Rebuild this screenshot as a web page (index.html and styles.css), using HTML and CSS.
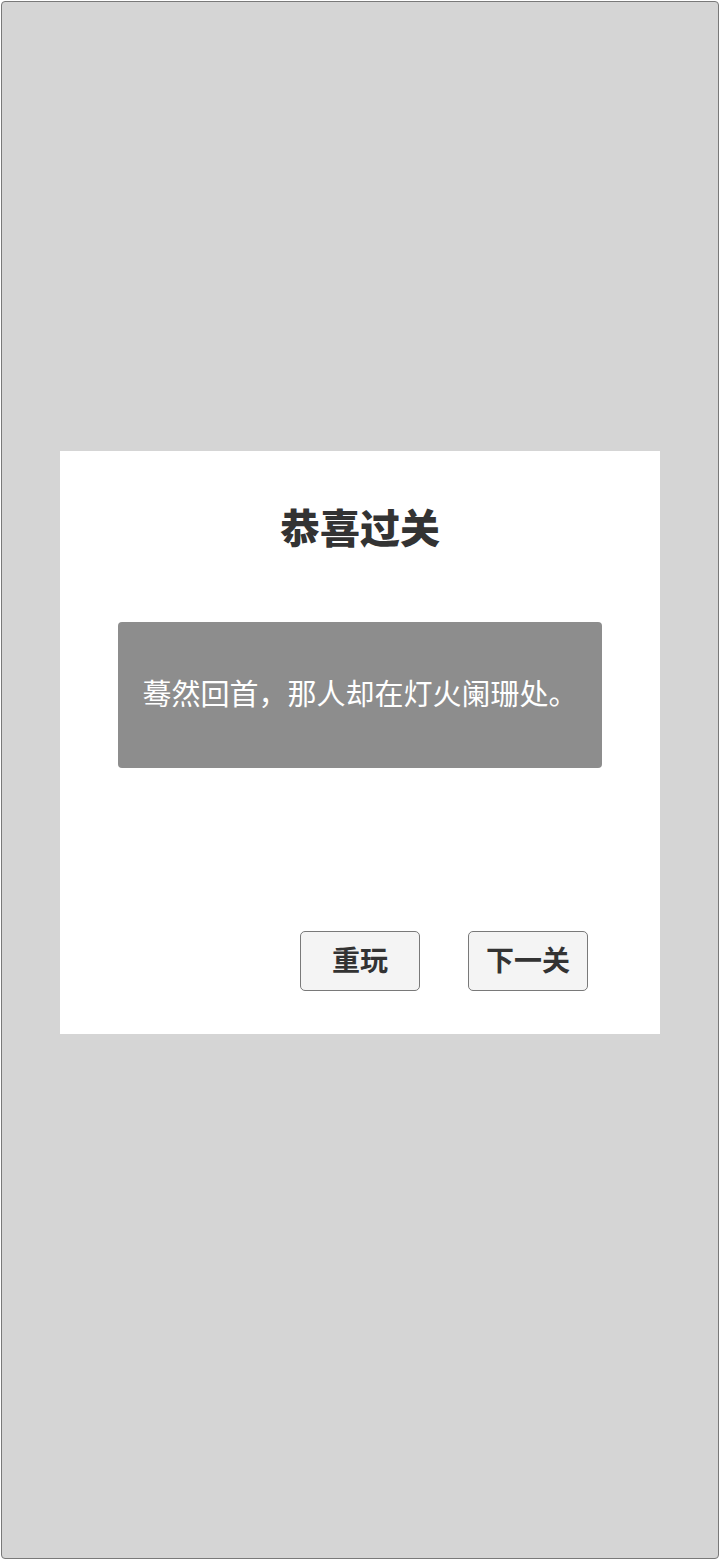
FILE: index.html
```
<!DOCTYPE html>
<html lang="zh-CN">
<head>
    <meta charset="UTF-8">
    <meta name="viewport" content="width=device-width, initial-scale=1.0">
    <title>恭喜过关</title>
    <link rel="stylesheet" href="styles.css">
</head>
<body>
    <main class="screen">
        <section class="dialog" role="dialog" aria-labelledby="dialogTitle">
            <h1 class="dialog-title" id="dialogTitle">恭喜过关</h1>
            <p class="verse">蓦然回首，那人却在灯火阑珊处。</p>
            <div class="actions">
                <button class="btn" type="button">重玩</button>
                <button class="btn" type="button">下一关</button>
            </div>
        </section>
    </main>
</body>
</html>
```

FILE: styles.css
```
/* --- 基本样式 --- */
* {
    box-sizing: border-box;
}

body {
    display: flex;
    min-height: 100vh;
    margin: 0;
    padding: 1px;
    background-color: #fff;
    color: #333;
    font-family: "Liberation Sans", "Noto Sans CJK SC", sans-serif;
}

/* --- 背景 --- */
.screen {
    flex: 1;
    display: flex;
    flex-direction: column;
    justify-content: center;
    padding: 0 58px 76px;
    background-color: #d5d5d5;
    border: 1px solid #797979;
    border-radius: 4px;
}

/* --- 过关弹窗 --- */
.dialog {
    padding: 48px 58px 43px;
    background-color: #fff;
}

.dialog-title {
    margin: 0 0 63px;
    font-size: 40px;
    line-height: 60px;
    font-weight: 900;
    text-align: center;
}

.verse {
    margin: 0 0 163px;
    padding: 51px 16px;
    background-color: #8d8d8d;
    border-radius: 4px;
    color: #fff;
    font-size: 29px;
    font-weight: 400;
    line-height: 44px;
    text-align: center;
}

/* --- 按钮 --- */
.actions {
    display: flex;
    justify-content: flex-end;
    gap: 48px;
    padding-right: 14px;
}

.btn {
    width: 120px;
    height: 60px;
    padding: 0 0 4px;
    background-color: #f4f4f4;
    border: 1px solid #797979;
    border-radius: 5px;
    color: #333;
    font-family: inherit;
    font-size: 28px;
    font-weight: bold;
    cursor: pointer;
}

.btn:hover {
    background-color: #e8e8e8;
}
```
